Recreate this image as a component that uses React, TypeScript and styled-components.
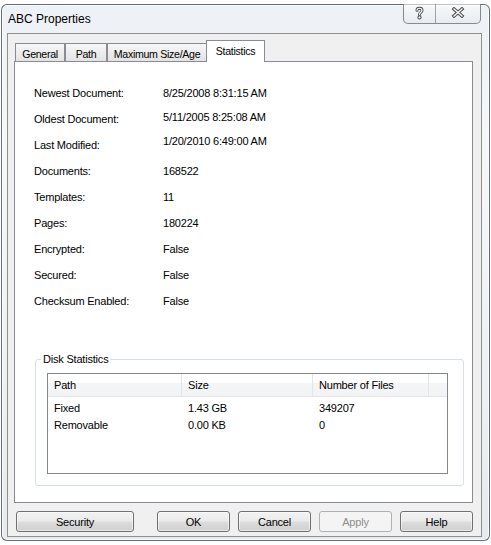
import { createGlobalStyle, styled } from 'styled-components'

const GlobalStyle = createGlobalStyle`
    html, body {
        margin: 0;
        padding: 0;
        background: #ffffff;
    }
    body {
        font-family: "Liberation Sans", Arial, sans-serif;
        font-size: 11px;
        color: #000000;
    }
    * {
        box-sizing: border-box;
    }
`

const stats = [
    { label: 'Newest Document:', value: '8/25/2008 8:31:15 AM', lift: 0 },
    { label: 'Oldest Document:', value: '5/11/2005 8:25:08 AM', lift: 2 },
    { label: 'Last Modified:', value: '1/20/2010 6:49:00 AM', lift: 4 },
    { label: 'Documents:', value: '168522', lift: 0 },
    { label: 'Templates:', value: '11', lift: 0 },
    { label: 'Pages:', value: '180224', lift: 0 },
    { label: 'Encrypted:', value: 'False', lift: 0 },
    { label: 'Secured:', value: 'False', lift: 0 },
    { label: 'Checksum Enabled:', value: 'False', lift: 0 },
]

const tabs = [
    { name: 'General', width: 50 },
    { name: 'Path', width: 42 },
    { name: 'Maximum Size/Age', width: 100 },
    { name: 'Statistics', width: 59, active: true },
]

const disks = [
    { path: 'Fixed', size: '1.43 GB', files: '349207' },
    { path: 'Removable', size: '0.00 KB', files: '0' },
]

const HelpGlyph = () => (
    <svg width="9" height="14" viewBox="0 0 9 14">
        <g fill="none" strokeLinecap="round">
            <path d="M2 4.2 C2 1.6 7 1.6 7 4.2 C7 6.3 4.5 6.3 4.5 8.6" stroke="#4d4d4d" strokeWidth="3" />
            <circle cx="4.5" cy="11.4" r="0.6" stroke="#4d4d4d" strokeWidth="3" />
            <path d="M2 4.2 C2 1.6 7 1.6 7 4.2 C7 6.3 4.5 6.3 4.5 8.6" stroke="#ffffff" strokeWidth="1.2" />
            <circle cx="4.5" cy="11.4" r="0.3" stroke="#ffffff" strokeWidth="1.2" />
        </g>
    </svg>
)

const CloseGlyph = () => (
    <svg width="14" height="11" viewBox="0 0 14 11">
        <path d="M3 2 L11 9 M11 2 L3 9" stroke="#4d4d4d" strokeWidth="3.4" strokeLinecap="square" />
        <path d="M3 2 L11 9 M11 2 L3 9" stroke="#ffffff" strokeWidth="1.3" strokeLinecap="square" />
    </svg>
)

const App = () => {
    return (
        <>
            <GlobalStyle />
            <Window>
                <TitleBar>
                    <Title>ABC Properties</Title>
                    <CaptionButtons>
                        <CaptionButton $width={32}>
                            <HelpGlyph />
                        </CaptionButton>
                        <CaptionButton $width={44} $last>
                            <CloseGlyph />
                        </CaptionButton>
                    </CaptionButtons>
                </TitleBar>
                <Client>
                    <TabStrip>
                        {tabs.map((tab) => (
                            <Tab key={tab.name} $width={tab.width} $active={tab.active}>
                                {tab.name}
                            </Tab>
                        ))}
                    </TabStrip>
                    <Panel>
                        {stats.map((row) => (
                            <StatRow key={row.label}>
                                <StatLabel>{row.label}</StatLabel>
                                <StatValue $lift={row.lift}>{row.value}</StatValue>
                            </StatRow>
                        ))}
                        <GroupBox>
                            <Legend>Disk Statistics</Legend>
                            <ListView>
                                <ListHeader>
                                    <HeaderCell>Path</HeaderCell>
                                    <HeaderCell>Size</HeaderCell>
                                    <HeaderCell>Number of Files</HeaderCell>
                                    <HeaderCell $last />
                                </ListHeader>
                                <ListBody>
                                    {disks.map((disk) => (
                                        <ListRow key={disk.path}>
                                            <Cell>{disk.path}</Cell>
                                            <Cell>{disk.size}</Cell>
                                            <Cell>{disk.files}</Cell>
                                            <Cell />
                                        </ListRow>
                                    ))}
                                </ListBody>
                            </ListView>
                        </GroupBox>
                    </Panel>
                    <ButtonRow>
                        <DialogButton $width={118}>Security</DialogButton>
                        <ButtonGroup>
                            <DialogButton $width={73}>OK</DialogButton>
                            <DialogButton $width={73}>Cancel</DialogButton>
                            <DialogButton $width={73} disabled>Apply</DialogButton>
                            <DialogButton $width={73}>Help</DialogButton>
                        </ButtonGroup>
                    </ButtonRow>
                </Client>
            </Window>
        </>
    )
}

export default App

const Window = styled.div`
    display: flex;
    flex-direction: column;
    width: 489px;
    height: 537px;
    margin: 4px 0 0 1px;
    padding: 0 7px 3px 5px;
    border: 1px solid rgba(50, 58, 66, 0.72);
    border-radius: 6px;
    background: linear-gradient(180deg, #edf1f5 0%, #f5f7f9 25%, #eef1f4 70%, #e6eaee 100%);
    box-shadow: inset 0 0 0 1px rgba(255, 255, 255, 0.75);
`

const TitleBar = styled.div`
    display: flex;
    align-items: flex-start;
    justify-content: space-between;
    height: 28px;
    padding-left: 1px;
`

const Title = styled.div`
    margin-top: 7px;
    font-size: 12px;
    line-height: 15px;
    color: #000000;
`

const CaptionButtons = styled.div`
    display: flex;
    height: 20px;
    margin: -1px 1px 0 0;
    border: 1px solid rgba(60, 64, 70, 0.6);
    border-top: none;
    border-radius: 0 0 5px 5px;
    overflow: hidden;
    background: linear-gradient(180deg, rgba(255, 255, 255, 0.6), rgba(228, 233, 238, 0.7));
`

const CaptionButton = styled.div<{ $width: number; $last?: boolean }>`
    display: flex;
    align-items: center;
    justify-content: center;
    width: ${(p) => p.$width}px;
    height: 100%;
    padding-bottom: 2px;
    border-right: ${(p) => (p.$last ? 'none' : '1px solid rgba(60, 64, 70, 0.45)')};
`

const Client = styled.div`
    display: flex;
    flex-direction: column;
    flex: 1;
    padding: 6px 8px 4px 6px;
    border: 1px solid #8e8f8f;
    background: #f0f0f0;
`

const TabStrip = styled.div`
    display: flex;
    align-items: flex-end;
    height: 21px;
    padding-left: 1px;
`

const Tab = styled.div<{ $width: number; $active?: boolean }>`
    position: relative;
    z-index: ${(p) => (p.$active ? 1 : 0)};
    width: ${(p) => p.$width}px;
    height: ${(p) => (p.$active ? 22 : 18)}px;
    margin-left: ${(p) => (p.$active ? -1 : 0)}px;
    margin-bottom: ${(p) => (p.$active ? -1 : 0)}px;
    padding-top: 3px;
    border: 1px solid #898c95;
    border-bottom: none;
    background: ${(p) => (p.$active ? '#ffffff' : 'linear-gradient(180deg, #f7f7f7 0%, #ebebeb 60%, #e3e3e3 100%)')};
    font-size: 10.6px;
    letter-spacing: -0.3px;
    line-height: 14px;
    text-align: center;
    white-space: nowrap;
`

const Panel = styled.div`
    display: flex;
    flex-direction: column;
    height: 442px;
    padding: 18px 8px 0 19px;
    border: 1px solid #898c95;
    background: #ffffff;
`

const StatRow = styled.div`
    display: flex;
    align-items: center;
    height: 26px;
`

const StatLabel = styled.div`
    width: 129px;
    font-size: 11px;
    letter-spacing: -0.2px;
`

const StatValue = styled.div<{ $lift: number }>`
    padding-bottom: ${(p) => p.$lift * 2}px;
    font-size: 11px;
    letter-spacing: -0.2px;
`

const GroupBox = styled.fieldset`
    min-width: 0;
    margin: 39px 0 0 1px;
    padding: 7px 15px 11px 11px;
    border: 1px solid #d5dfe5;
    border-radius: 3px;
`

const Legend = styled.legend`
    margin-left: -6px;
    padding: 0 2px;
    font-size: 11px;
    letter-spacing: -0.2px;
    line-height: 13px;
`

const ListView = styled.div`
    height: 101px;
    border: 1px solid #828790;
    background: #ffffff;
`

const columns = '134px 131px 116px 1fr'

const ListHeader = styled.div`
    display: grid;
    grid-template-columns: ${columns};
    height: 23px;
    border-bottom: 1px solid #e5e5e5;
    background: linear-gradient(180deg, #ffffff 0%, #ffffff 42%, #f4f5f6 42%, #f2f3f4 100%);
`

const HeaderCell = styled.div<{ $last?: boolean }>`
    padding: 4px 0 0 6px;
    border-right: ${(p) => (p.$last ? 'none' : '1px solid #e3e4e6')};
    font-size: 11px;
    letter-spacing: -0.2px;
    line-height: 14px;
    white-space: nowrap;
`

const ListBody = styled.div`
    display: flex;
    flex-direction: column;
    padding-top: 3px;
`

const ListRow = styled.div`
    display: grid;
    grid-template-columns: ${columns};
    height: 17px;
`

const Cell = styled.div`
    padding-left: 6px;
    font-size: 11px;
    letter-spacing: -0.2px;
    line-height: 17px;
    white-space: nowrap;
`

const ButtonRow = styled.div`
    display: flex;
    height: 21px;
    margin-top: 8px;
    padding-left: 2px;
`

const ButtonGroup = styled.div`
    display: flex;
    gap: 8px;
    margin-left: auto;
`

const DialogButton = styled.button<{ $width: number }>`
    width: ${(p) => p.$width}px;
    height: 21px;
    padding: 0;
    border: 1px solid #707070;
    border-radius: 3px;
    background: linear-gradient(180deg, #f2f2f2 0%, #ebebeb 48%, #dddddd 52%, #cfcfcf 100%);
    box-shadow: inset 0 0 0 1px rgba(255, 255, 255, 0.55);
    font-family: "Liberation Sans", Arial, sans-serif;
    font-size: 11px;
    letter-spacing: -0.2px;
    color: #000000;

    &:disabled {
        border-color: #adb2b5;
        background: #f4f4f4;
        box-shadow: none;
        color: #8d8d8d;
    }
`
